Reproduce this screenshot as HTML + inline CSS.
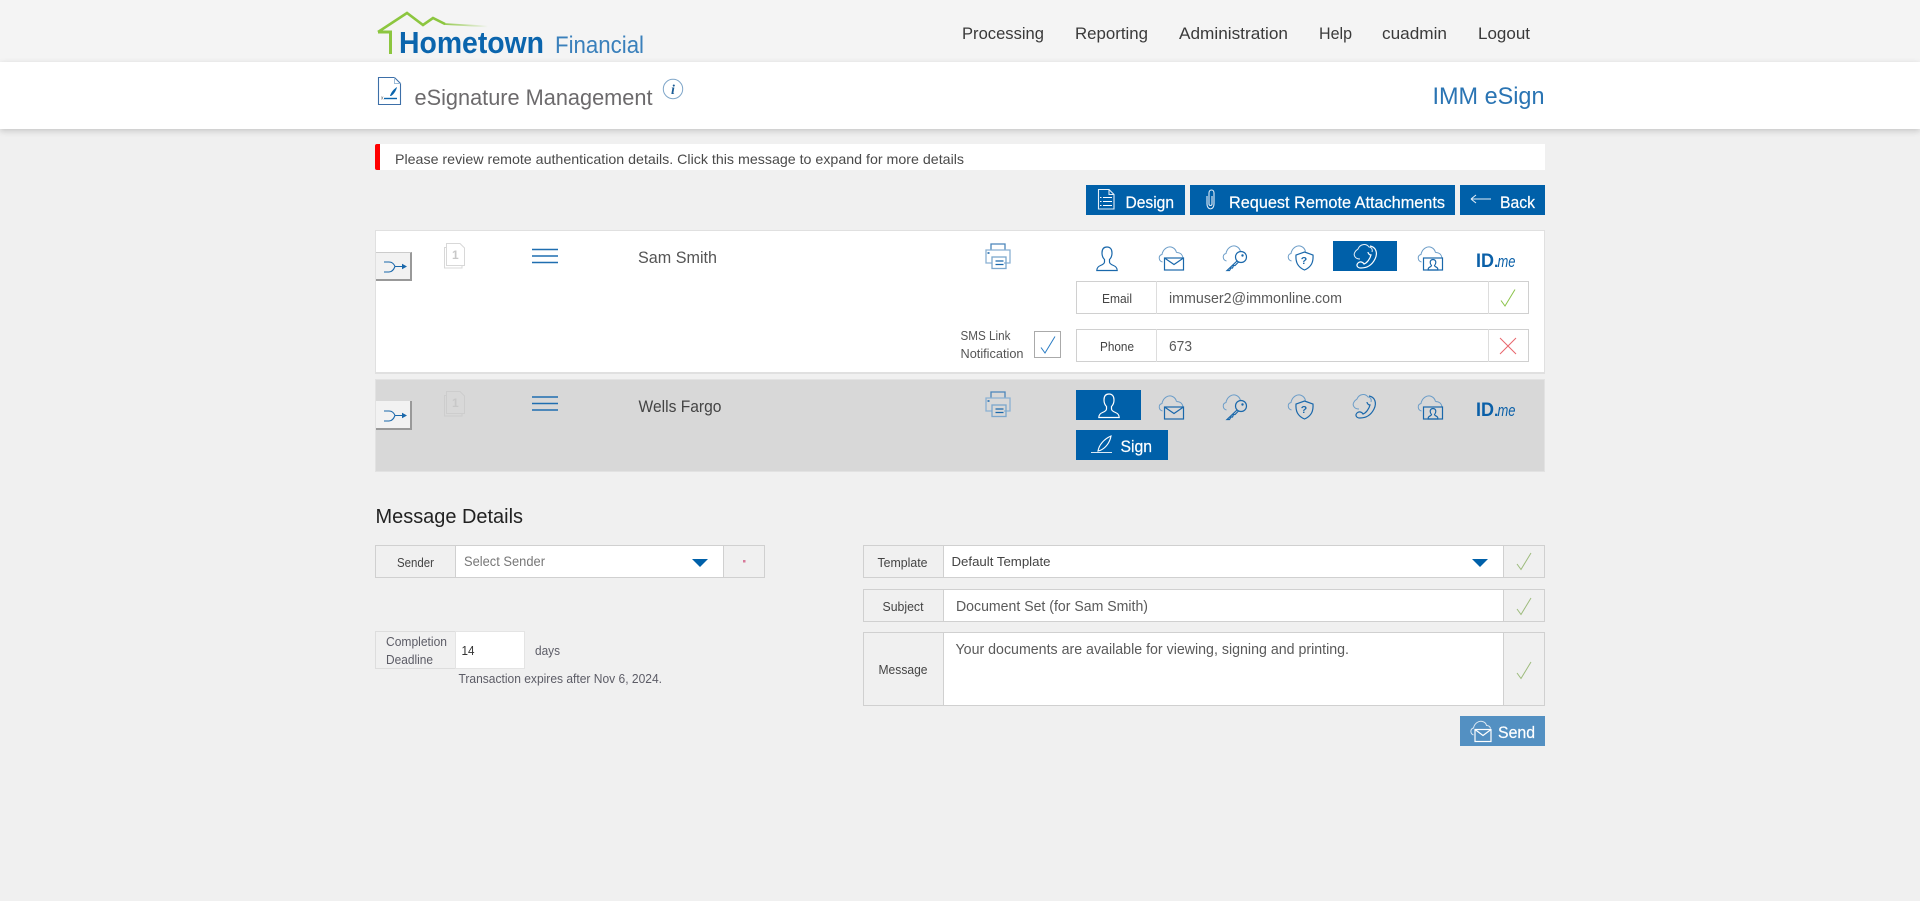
<!DOCTYPE html>
<html lang="en">
<head>
<meta charset="utf-8">
<title>eSignature Management</title>
<style>
html,body{margin:0;padding:0;width:1920px;height:901px;overflow:hidden;background:#f0f0f0;font-family:"Liberation Sans",sans-serif}
.b{position:absolute;box-sizing:border-box}
svg#o{position:absolute;left:0;top:0;width:1920px;height:901px}
svg#o text{font-family:"Liberation Sans",sans-serif}
.i{fill:none;stroke:var(--s,#1a68ab);stroke-width:1.2}
.c{fill:none;stroke:var(--t,#6c9dc8);stroke-width:1}
.w{--s:#fff;--t:#e8f0f7}
</style>
</head>
<body>
<div class="b" style="left:0;top:0;width:1920px;height:62px;background:#f4f4f4"></div>
<div class="b" style="left:0;top:62px;width:1920px;height:67px;background:#fff;box-shadow:0 2px 6px rgba(0,0,0,.18)"></div>

<div class="b" style="left:375px;top:144px;width:1170px;height:26px;background:#fff;border-left:5px solid #f00;border-radius:2px 0 0 2px"></div>

<div class="b" style="left:1086px;top:185px;width:99px;height:30px;background:#0060a9"></div>
<div class="b" style="left:1190px;top:185px;width:265px;height:30px;background:#0060a9"></div>
<div class="b" style="left:1460px;top:185px;width:85px;height:30px;background:#0060a9"></div>

<div class="b" style="left:375px;top:230px;width:1170px;height:144px;background:#fff;border:1px solid #e0e0e0;border-bottom-width:2px"></div>
<div class="b" style="left:375px;top:379px;width:1170px;height:93px;background:#d8d8d8;border:1px solid #e2e2e2"></div>

<div class="b" style="left:376px;top:252px;width:36px;height:29px;background:#f2f2f2;border-right:2px solid #999;border-bottom:2px solid #999;border-top:1px solid #ccc"></div>
<div class="b" style="left:376px;top:401px;width:36px;height:29px;background:#f2f2f2;border-right:2px solid #999;border-bottom:2px solid #999"></div>

<div class="b" style="left:1333px;top:241px;width:64px;height:30px;background:#0060a9"></div>
<div class="b" style="left:1076px;top:390px;width:65px;height:30px;background:#0060a9"></div>
<div class="b" style="left:1076px;top:430px;width:92px;height:30px;background:#0060a9"></div>

<!-- email -->
<div class="b" style="left:1076px;top:281px;width:453px;height:33px;background:#fff;border:1px solid #d0d0d0"></div>
<div class="b" style="left:1156px;top:281px;width:1px;height:33px;background:#ddd"></div>
<div class="b" style="left:1488px;top:281px;width:1px;height:33px;background:#ddd"></div>
<!-- phone -->
<div class="b" style="left:1076px;top:329px;width:453px;height:33px;background:#fff;border:1px solid #d0d0d0"></div>
<div class="b" style="left:1156px;top:329px;width:1px;height:33px;background:#ddd"></div>
<div class="b" style="left:1488px;top:329px;width:1px;height:33px;background:#ddd"></div>
<div class="b" style="left:1034px;top:331px;width:27px;height:27px;background:#fff;border:1px solid #aaa"></div>

<!-- sender -->
<div class="b" style="left:375px;top:545px;width:390px;height:33px;background:#f0f0f0;border:1px solid #d0d0d0"></div>
<div class="b" style="left:455px;top:546px;width:269px;height:31px;background:#fff;border-left:1px solid #d0d0d0;border-right:1px solid #d0d0d0"></div>
<!-- deadline -->
<div class="b" style="left:375px;top:631px;width:81px;height:38px;border:1px solid #ddd;background:#f0f0f0"></div>
<div class="b" style="left:455px;top:631px;width:70px;height:38px;border:1px solid #e4e4e4;background:#fff"></div>
<!-- template -->
<div class="b" style="left:863px;top:545px;width:682px;height:33px;background:#f0f0f0;border:1px solid #d0d0d0"></div>
<div class="b" style="left:943px;top:546px;width:561px;height:31px;background:#fff;border-left:1px solid #d0d0d0;border-right:1px solid #d0d0d0"></div>
<!-- subject -->
<div class="b" style="left:863px;top:589px;width:682px;height:33px;background:#f0f0f0;border:1px solid #d0d0d0"></div>
<div class="b" style="left:943px;top:590px;width:561px;height:31px;background:#fff;border-left:1px solid #d0d0d0;border-right:1px solid #d0d0d0"></div>
<!-- message -->
<div class="b" style="left:863px;top:632px;width:682px;height:74px;background:#f0f0f0;border:1px solid #d0d0d0"></div>
<div class="b" style="left:943px;top:633px;width:561px;height:72px;background:#fff;border-left:1px solid #d0d0d0;border-right:1px solid #d0d0d0"></div>
<!-- send -->
<div class="b" style="left:1460px;top:716px;width:85px;height:30px;background:#5390c2"></div>

<svg id="o" viewBox="0 0 1920 901" xmlns="http://www.w3.org/2000/svg">
<defs>
<linearGradient id="fade" gradientUnits="userSpaceOnUse" x1="440" y1="0" x2="488" y2="0"><stop offset="0" stop-color="#8cc63f"/><stop offset="1" stop-color="#8cc63f" stop-opacity="0"/></linearGradient>
<g id="person"><path class="i" d="M11 1C7.500 1 6 3.500 6 7c0 3 1 5 2.500 6.500V16c0 1.500-1.500 2.500-4 3.500C2 20.500 .8 22 .8 24.500h20.400c0-2.500-1.200-4-3.700-5-2.500-1-4-2-4-3.500v-2.500C15 12 16 10 16 7c0-3.500-1.500-6-5-6z"/></g>
<g id="cloud"><path class="c" d="M4.500 16C.5 15 0 9.500 4 8.500 5 3 10 -.5 14.500 1.500c2.500 1 3.500 3 4 5"/></g>
<g id="mail"><use href="#cloud"/><path d="M18.500 6.500c3.500 0 6 2 6.500 5.500" class="c"/><rect class="i" x="6.500" y="12" width="19" height="12"/><path class="i" d="M6.500 12l9.500 6.500 9.500-6.500"/></g>
<g id="key"><use href="#cloud"/><circle class="i" cx="19" cy="12" r="5.500"/><circle cx="20.500" cy="10.500" r="1.200" fill="#1a68ab"/><path class="i" d="M15 16L5 25.500H7.500l1.500-2.500h1.500l1-2.500h1.500l3.500-3.500"/></g>
<g id="shield"><use href="#cloud"/><path class="i" d="M17.500 7l8.500 3c.5 7-1.500 12-8.500 15-7-3-9-8-8.500-15z"/><text x="17" y="19" text-anchor="middle" font-size="10.500" font-weight="700" fill="#1a68ab">?</text></g>
<g id="phone"><path class="c" d="M7 15C2 15 0 11 2 8c1-2 2-2 3-3C7 0 13-1 16 3c2 0 4 2 3 5"/><path class="i" d="M17 2c6 1 8 7 5 13-3 6-8 9-14 9-4 0-5-3-3-5 2-2 5-1 6 1 3-1 6-5 7-9-2 0-3-2-3-3"/></g>
<g id="video"><use href="#cloud"/><path d="M18.500 6.500c3.500 0 6 2 6.500 5.500" class="c"/><rect class="i" x="6.500" y="12" width="19" height="12"/><path class="i" d="M16 13.500c-1.800 0-2.800 1.300-2.800 2.800 0 1.700.8 2.700 1.300 3.200 0 .9-1.300 1.300-2.700 2.200-.5.400-.6 1-.6 2.300h9.600c0-1.300-.1-1.900-.6-2.300-1.400-.9-2.700-1.300-2.700-2.200.5-.5 1.300-1.500 1.300-3.200 0-1.500-1-2.800-2.800-2.800z"/></g>
<g id="printer"><path d="M6 7V1h14v6" fill="none" stroke="#4a85ba" stroke-width="1.300"/><path d="M7 20H1V7h24v13h-6" fill="none" stroke="#8ab1d3" stroke-width="1.300"/><rect x="2.500" y="9" width="2" height="2" fill="#4a85ba"/><rect x="7" y="14" width="14" height="11.500" fill="none" stroke="#7ba7cd" stroke-width="1.300"/><path d="M10.500 18h8M10.500 21.500h8" stroke="#1a68ab" stroke-width="1.300" fill="none"/></g>
<g id="burger"><path d="M532 0h26M532 6.500h26M532 13h26" stroke="#1f6eb0" stroke-width="1.400" fill="none"/></g>
<g id="expand"><path d="M0 0h5c3.500 0 5 2 6 4.500H21M0 10h5c3.500 0 5-3 6-5.500" fill="none" stroke="#1a68ab" stroke-width="1.100"/><path d="M18 1.800l5 2.700-5 2.700z" fill="#1a68ab"/></g>
<g id="check"><path d="M0 11l4 5.500L14 0" fill="none" stroke-width="1"/></g>
</defs>

<!-- logo -->
<path d="M378 32L407 13l16 12 10-7 12 6" fill="none" stroke="#8cc63f" stroke-width="2.600"/>
<path d="M444 24l44 2.500" fill="none" stroke="url(#fade)" stroke-width="1.800"/>
<path d="M378 32h12.500V54" fill="none" stroke="#8cc63f" stroke-width="3"/>
<text x="399" y="53" font-size="30.500" font-weight="700" fill="#0b65ad" textLength="145" lengthAdjust="spacingAndGlyphs">Hometown</text>
<text x="555" y="53" font-size="24" fill="#3a80bb" textLength="89" lengthAdjust="spacingAndGlyphs">Financial</text>

<!-- nav -->
<g font-size="16.500" fill="#3a3a3a">
<text x="962" y="39" textLength="82" lengthAdjust="spacingAndGlyphs">Processing</text>
<text x="1075" y="39" textLength="73" lengthAdjust="spacingAndGlyphs">Reporting</text>
<text x="1179" y="39" textLength="109" lengthAdjust="spacingAndGlyphs">Administration</text>
<text x="1319" y="39" textLength="33" lengthAdjust="spacingAndGlyphs">Help</text>
<text x="1382" y="39" textLength="65" lengthAdjust="spacingAndGlyphs">cuadmin</text>
<text x="1478" y="39" textLength="52" lengthAdjust="spacingAndGlyphs">Logout</text>
</g>

<!-- title bar -->
<path d="M378.500 77.500h16l6 6v21h-22z" fill="none" stroke="#3d6fa8" stroke-width="1.100"/>
<path d="M394.500 77.500v6h6" fill="none" stroke="#9dbcd8" stroke-width="1"/>
<path d="M390 96c1-4 4-7 7-9-1 4-3 7-6 9z" fill="#0b65ad"/>
<path d="M384 98.500h13" stroke="#0b65ad" stroke-width="1.400"/>
<text x="381" y="99.500" font-size="5" fill="#555">x</text>
<text x="414.500" y="105" font-size="22" fill="#6c6a6c" textLength="238" lengthAdjust="spacingAndGlyphs">eSignature Management</text>
<circle cx="673" cy="89" r="9.700" fill="none" stroke="#7fa6c9" stroke-width="1"/>
<text x="673" y="94" text-anchor="middle" font-style="italic" font-weight="700" font-size="14" fill="#1d5d96" style="font-family:'Liberation Serif',serif">i</text>
<text x="1432.500" y="104" font-size="24.500" fill="#2a74b3" textLength="112" lengthAdjust="spacingAndGlyphs">IMM eSign</text>

<!-- alert -->
<text x="395" y="164" font-size="14" fill="#4a4a4a" textLength="569" lengthAdjust="spacingAndGlyphs">Please review remote authentication details. Click this message to expand for more details</text>

<!-- action buttons -->
<g fill="#fff" font-size="17" stroke="#fff" stroke-width=".2">
<text x="1125.500" y="208" textLength="48.500" lengthAdjust="spacingAndGlyphs">Design</text>
<text x="1229" y="208" textLength="216" lengthAdjust="spacingAndGlyphs">Request Remote Attachments</text>
<text x="1500" y="208" textLength="35" lengthAdjust="spacingAndGlyphs">Back</text>
</g>
<g fill="none" stroke="#e4eef7" stroke-width="1.100">
<path d="M1098.500 189.500h10.500l5 5v14.500h-15.500z"/><path d="M1109 189.500v5h5"/>
<path d="M1103 197.500h9M1103 201.500h9M1103 205.500h9" stroke="#fff"/>
<path d="M1100 197.500h1.500M1100 201.500h1.500M1100 205.500h1.500" stroke="#fff"/>
<path d="M1207 196v8c0 6.500 7 6.500 7 0v-11c0-4-5-4-5 0v11c0 2 3 2 3 0v-8"/>
<path d="M1471 199h20M1471 199l5-4M1471 199l5 4"/>
</g>

<!-- row 1 -->
<g transform="translate(384 262)"><use href="#expand"/></g>
<g fill="#fff" stroke="#d8d8d8" stroke-width="1">
<path d="M444.500 247.500h2v18h15.500v2.500h-17.500v-20.500z"/>
<path d="M446.500 243.500h13.500l4.500 4.500v17.500h-18z"/>
</g>
<text x="452" y="259" font-size="12" font-weight="700" fill="#c8c8c8">1</text>
<g transform="translate(0 249.500)"><use href="#burger"/></g>
<text x="638" y="263" font-size="16.500" fill="#555" textLength="79" lengthAdjust="spacingAndGlyphs">Sam Smith</text>
<g transform="translate(985 243)"><use href="#printer"/></g>

<g transform="translate(1096 246)"><use href="#person"/></g>
<g transform="translate(1158 246)"><use href="#mail"/></g>
<g transform="translate(1222 245)"><use href="#key"/></g>
<g transform="translate(1287 245)"><use href="#shield"/></g>
<g transform="translate(1353 244)" class="w"><use href="#phone"/></g>
<g transform="translate(1417 246)"><use href="#video"/></g>
<text x="1476" y="267" font-size="19" font-weight="700" fill="#0b60a8" textLength="18" lengthAdjust="spacingAndGlyphs">ID</text>
<text x="1494" y="267" font-size="16" font-weight="700" fill="#0b60a8">.</text>
<text x="1497.500" y="267" font-size="17" font-style="italic" fill="#0b60a8" textLength="18" lengthAdjust="spacingAndGlyphs">me</text>

<text x="1102" y="303" font-size="13" fill="#444" textLength="30" lengthAdjust="spacingAndGlyphs">Email</text>
<text x="1169" y="303" font-size="15" fill="#5a5a5a" textLength="173" lengthAdjust="spacingAndGlyphs">immuser2@immonline.com</text>
<g transform="translate(1501 289.500)" stroke="#8bc34a"><use href="#check"/></g>
<text x="1100" y="351" font-size="13" fill="#444" textLength="34" lengthAdjust="spacingAndGlyphs">Phone</text>
<text x="1169" y="351" font-size="15" fill="#5a5a5a" textLength="23" lengthAdjust="spacingAndGlyphs">673</text>
<path d="M1500 338l16 16M1516 338l-16 16" stroke="#e8656c" stroke-width="1" fill="none"/>
<text x="960.500" y="340" font-size="13" fill="#555" textLength="50" lengthAdjust="spacingAndGlyphs">SMS Link</text>
<text x="960.500" y="358" font-size="13" fill="#555" textLength="63" lengthAdjust="spacingAndGlyphs">Notification</text>
<g transform="translate(1041 336.500)" stroke="#2a7cc4"><use href="#check"/></g>

<!-- row 2 -->
<g transform="translate(384 411)"><use href="#expand"/></g>
<g fill="none" stroke="#cdcdcd" stroke-width="1">
<path d="M444.500 395.500h2v18h15.500v2.500h-17.500v-20.500z"/>
<path d="M446.500 391.500h13.500l4.500 4.500v17.500h-18z"/>
</g>
<text x="452" y="407" font-size="12" font-weight="700" fill="#c8c8c8">1</text>
<g transform="translate(0 397)"><use href="#burger"/></g>
<text x="638.500" y="412" font-size="16.500" fill="#444" textLength="83" lengthAdjust="spacingAndGlyphs">Wells Fargo</text>
<g transform="translate(985 391)"><use href="#printer"/></g>

<g transform="translate(1098 393)" class="w"><use href="#person"/></g>
<g transform="translate(1158 395)"><use href="#mail"/></g>
<g transform="translate(1222 394)"><use href="#key"/></g>
<g transform="translate(1287 394)"><use href="#shield"/></g>
<g transform="translate(1352 394)"><use href="#phone"/></g>
<g transform="translate(1417 395)"><use href="#video"/></g>
<text x="1476" y="416" font-size="19" font-weight="700" fill="#0b60a8" textLength="18" lengthAdjust="spacingAndGlyphs">ID</text>
<text x="1494" y="416" font-size="16" font-weight="700" fill="#0b60a8">.</text>
<text x="1497.500" y="416" font-size="17" font-style="italic" fill="#0b60a8" textLength="18" lengthAdjust="spacingAndGlyphs">me</text>

<path d="M1091 452.500h21" stroke="#dce8f3" stroke-width="1" fill="none"/>
<path d="M1098 451c1-6 6-12 13-15-1 6-5 12-11 14.500z" fill="none" stroke="#fff" stroke-width="1.100"/>
<text x="1120.500" y="452" font-size="17" fill="#fff" stroke="#fff" stroke-width=".2" textLength="31.500" lengthAdjust="spacingAndGlyphs">Sign</text>

<!-- message details -->
<text x="375.500" y="523" font-size="20" fill="#222" textLength="147.500" lengthAdjust="spacingAndGlyphs">Message Details</text>
<text x="397" y="567" font-size="13" fill="#444" textLength="37" lengthAdjust="spacingAndGlyphs">Sender</text>
<text x="464" y="566" font-size="13.500" fill="#777" textLength="81" lengthAdjust="spacingAndGlyphs">Select Sender</text>
<path d="M692 559h16l-8 8z" fill="#0060a9"/>
<rect x="743" y="560" width="2.500" height="2.500" fill="#d77a9a"/>

<text x="386" y="646" font-size="13" fill="#5c5c66" textLength="61" lengthAdjust="spacingAndGlyphs">Completion</text>
<text x="386" y="664" font-size="13" fill="#5c5c66" textLength="47" lengthAdjust="spacingAndGlyphs">Deadline</text>
<text x="461.500" y="655" font-size="13" fill="#333" textLength="13" lengthAdjust="spacingAndGlyphs">14</text>
<text x="535" y="655" font-size="13" fill="#5c5c66" textLength="25" lengthAdjust="spacingAndGlyphs">days</text>
<text x="458.500" y="683" font-size="13" fill="#5c5c66" textLength="203.500" lengthAdjust="spacingAndGlyphs">Transaction expires after Nov 6, 2024.</text>

<text x="877.500" y="567" font-size="13" fill="#444" textLength="50" lengthAdjust="spacingAndGlyphs">Template</text>
<text x="951.500" y="566" font-size="13" fill="#444" textLength="99" lengthAdjust="spacingAndGlyphs">Default Template</text>
<path d="M1472 559h16l-8 8z" fill="#0060a9"/>
<g transform="translate(1517 553)" stroke="#9dbb7c"><use href="#check"/></g>
<text x="882.500" y="611" font-size="13" fill="#444" textLength="41" lengthAdjust="spacingAndGlyphs">Subject</text>
<text x="956" y="611" font-size="14.500" fill="#5a5a5a" textLength="192" lengthAdjust="spacingAndGlyphs">Document Set (for Sam Smith)</text>
<g transform="translate(1517 598)" stroke="#9dbb7c"><use href="#check"/></g>
<text x="878.500" y="674" font-size="13" fill="#444" textLength="49" lengthAdjust="spacingAndGlyphs">Message</text>
<text x="955.500" y="654" font-size="14.500" fill="#5a5a5a" textLength="393.500" lengthAdjust="spacingAndGlyphs">Your documents are available for viewing, signing and printing.</text>
<g transform="translate(1517 662)" stroke="#9dbb7c"><use href="#check"/></g>

<g transform="translate(1470 720)"><path d="M3.500 15C0 13.500 0 9 3.500 8 4.500 3 9 .5 12.500 1.500c2 .5 3.500 2 4 4 2 0 3.500 1 4 3" fill="none" stroke="#dce8f3" stroke-width="1"/><rect x="5" y="9.500" width="16" height="12" fill="none" stroke="#fff" stroke-width="1.200"/><path d="M5 9.500l8 6 8-6" fill="none" stroke="#fff" stroke-width="1.200"/></g>
<text x="1498" y="738" font-size="17" fill="#fff" stroke="#fff" stroke-width=".2" textLength="37" lengthAdjust="spacingAndGlyphs">Send</text>
</svg>
</body>
</html>
